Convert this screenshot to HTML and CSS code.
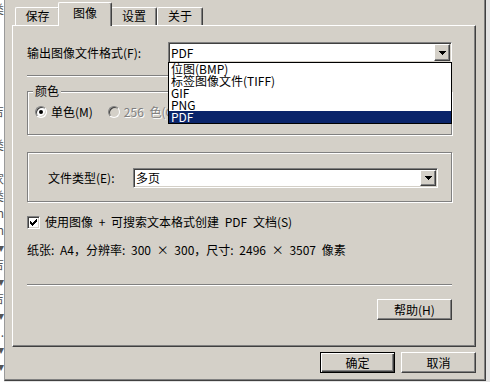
FILE: index.html
```html
<!DOCTYPE html>
<html lang="zh-CN">
<head>
    <meta charset="UTF-8">
    <meta name="viewport" content="width=device-width, initial-scale=1.0">
    <title>图像</title>
    <link rel="stylesheet" href="styles.css">
</head>
<body>
    <div class="screen">
        <!-- window behind the dialog, only a sliver shows -->
        <div class="behind">
            <span>类</span><span></span><span></span><span></span><span></span><span></span>
            <span>吉</span><span></span><span>类</span><span></span><span>家</span><span>类</span>
            <span>n</span><span>n</span><span>▾</span><span>吉</span><span>▾</span><span>吉</span>
            <span>▾</span><span>.</span><span>▾</span><span>▾</span>
        </div>

        <div class="dialog">
            <div class="tabs">
                <div class="tab">保存</div>
                <div class="tab active">图像</div>
                <div class="tab">设置</div>
                <div class="tab">关于</div>
            </div>

            <div class="panel">
                <div class="row format-row">
                    <label class="format-label">输出图像文件格式(F):</label>
                    <div class="combo format-combo">
                        <span class="combo-text">PDF</span>
                        <span class="drop-btn">
                            <svg width="7" height="4" viewBox="0 0 7 4"><rect x="0" y="0" width="7" height="1"/><rect x="1" y="1" width="5" height="1"/><rect x="2" y="2" width="3" height="1"/><rect x="3" y="3" width="1" height="1"/></svg>
                        </span>
                        <ul class="droplist">
                            <li>位图(BMP)</li>
                            <li>标签图像文件(TIFF)</li>
                            <li>GIF</li>
                            <li>PNG</li>
                            <li class="selected">PDF</li>
                        </ul>
                    </div>
                </div>

                <div class="separator"></div>

                <fieldset class="group color-group">
                    <legend>颜色</legend>
                    <div class="radios">
                        <span class="radio-item"><span class="radio checked"></span>单色(M)</span>
                        <span class="radio-item disabled"><span class="radio"></span>256 色(C)</span>
                    </div>
                </fieldset>

                <fieldset class="group type-group">
                    <div class="row">
                        <label class="type-label">文件类型(E):</label>
                        <div class="combo type-combo">
                            <span class="combo-text">多页</span>
                            <span class="drop-btn">
                                <svg width="7" height="4" viewBox="0 0 7 4"><rect x="0" y="0" width="7" height="1"/><rect x="1" y="1" width="5" height="1"/><rect x="2" y="2" width="3" height="1"/><rect x="3" y="3" width="1" height="1"/></svg>
                            </span>
                        </div>
                    </div>
                </fieldset>

                <div class="check-row">
                    <span class="checkbox">
                        <svg width="7" height="7" viewBox="0 0 7 7"><rect x="0" y="2" width="1" height="3"/><rect x="1" y="3" width="1" height="3"/><rect x="2" y="4" width="1" height="3"/><rect x="3" y="3" width="1" height="3"/><rect x="4" y="2" width="1" height="3"/><rect x="5" y="1" width="1" height="3"/><rect x="6" y="0" width="1" height="3"/></svg>
                    </span>
                    使用图像 + 可搜索文本格式创建 PDF 文档(S)
                </div>

                <div class="info">纸张: A4，分辨率: 300 × 300，尺寸: 2496 × 3507 像素</div>

                <div class="separator bottom-sep"></div>

                <div class="help-row">
                    <button class="btn">帮助(H)</button>
                </div>
            </div>

            <div class="actions">
                <button class="btn default">确定</button>
                <button class="btn">取消</button>
            </div>
        </div>
    </div>
</body>
</html>
```

FILE: styles.css
```css
/* classic dialog */
* {
    margin: 0;
    padding: 0;
    box-sizing: border-box;
}

body {
    font-family: "Noto Sans CJK SC", sans-serif;
    font-size: 12px;
    line-height: 14px;
    word-spacing: 3px;
    color: #000;
    background-color: #e4e4e4;
}

.screen {
    display: flex;
    width: 490px;
    height: 382px;
    overflow: hidden;
}

.behind {
    width: 4px;
    height: 382px;
    background-color: #fff;
    overflow: hidden;
    display: flex;
    flex-direction: column;
    align-items: flex-end;
    color: #555;
    flex-shrink: 0;
}

.behind span {
    display: block;
    height: 17px;
    line-height: 17px;
    white-space: nowrap;
}

.dialog {
    width: 482px;
    height: 381px;
    background-color: #d4d0c8;
    border-left: 1px solid #9a9a9a;
    border-right: 1px solid #404040;
    border-bottom: 1px solid #404040;
    box-shadow: inset -1px -1px #808080;
    padding-top: 2px;
}

/* tabs */
.tabs {
    display: flex;
    align-items: flex-end;
    height: 23px;
    padding-left: 10px;
}

.tab {
    width: 46px;
    height: 18px;
    text-align: center;
    line-height: 16px;
    border-top: 1px solid #fff;
    border-left: 1px solid #fff;
    border-right: 1px solid #404040;
    border-radius: 2px 2px 0 0;
    box-shadow: inset -1px 0 #808080;
    background-color: #d4d0c8;
}

.tab:first-child {
    width: 45px;
}

.tab.active {
    position: relative;
    z-index: 1;
    width: 54px;
    height: 24px;
    margin: 0 -1px -1px -2px;
    line-height: 19px;
}

/* panel */
.panel {
    margin-left: 7px;
    width: 464px;
    height: 322px;
    border-top: 1px solid #fff;
    border-left: 1px solid #fff;
    border-right: 1px solid #404040;
    border-bottom: 1px solid #404040;
    box-shadow: inset -1px -1px #808080;
    padding: 16px 23px 0 14px;
    display: flex;
    flex-direction: column;
}

.row {
    display: flex;
    align-items: center;
}

.format-row {
    height: 21px;
}

.format-label {
    width: 141px;
    flex-shrink: 0;
}

.combo {
    position: relative;
    flex: 1;
    display: flex;
    align-items: stretch;
    height: 21px;
    padding: 1px;
    background-color: #fff;
    border: 1px solid;
    border-color: #808080 #fff #fff #808080;
    box-shadow: inset 1px 1px #404040, inset -1px -1px #d4d0c8;
}

.combo-text {
    flex: 1;
    padding-left: 1px;
    line-height: 17px;
}

.drop-btn {
    width: 16px;
    display: flex;
    align-items: center;
    justify-content: center;
    background-color: #d4d0c8;
    border: 1px solid;
    border-color: #fff #404040 #404040 #fff;
    box-shadow: inset -1px -1px #808080;
}

.drop-btn svg {
    display: block;
    fill: #000;
    shape-rendering: crispEdges;
}

/* open list of the format combo */
.droplist {
    position: absolute;
    top: 19px;
    left: -1px;
    right: -1px;
    z-index: 2;
    list-style: none;
    background-color: #fff;
    border: 1px solid #000;
}

.droplist li {
    height: 12px;
    line-height: 12px;
    padding-left: 2px;
    white-space: nowrap;
}

.droplist li.selected {
    background-color: #0a246a;
    color: #fff;
}

.separator {
    margin-top: 12px;
    height: 2px;
    border-top: 1px solid #808080;
    border-bottom: 1px solid #fff;
}

/* group boxes */
.group {
    border: 1px solid #808080;
    box-shadow: inset 1px 1px #fff, 1px 1px #fff;
    min-width: 0;
}

.group legend {
    margin-left: -2px;
    padding: 0 2px;
    line-height: 14px;
    background-color: #d4d0c8;
}

.color-group {
    margin-top: 7px;
    padding: 7px 7px 15px 7px;
}

.radios {
    display: flex;
    align-items: center;
    height: 14px;
}

.radio-item {
    display: flex;
    align-items: center;
    white-space: nowrap;
}

.radio-item.disabled {
    margin-left: 15px;
    color: #808080;
    text-shadow: 1px 1px #fff;
}

.radio {
    width: 12px;
    height: 12px;
    margin-right: 4px;
    border-radius: 50%;
    border: 1px solid;
    border-color: #808080 #fff #fff #808080;
    box-shadow: inset 1px 1px #404040, inset -1px -1px #d4d0c8;
    background-color: #fff;
    display: flex;
    align-items: center;
    justify-content: center;
}

.radio.checked::after {
    content: "";
    width: 4px;
    height: 4px;
    border-radius: 50%;
    background-color: #000;
}

.disabled .radio {
    background-color: #d4d0c8;
}

.type-group {
    margin-top: 17px;
    padding: 15px 13px 13px 20px;
}

.type-label {
    width: 85px;
    flex-shrink: 0;
}

.type-combo {
    height: 20px;
}

.type-combo .combo-text {
    line-height: 16px;
}

/* checkbox + info */
.check-row {
    margin-top: 13px;
    height: 14px;
    display: flex;
    align-items: center;
    white-space: nowrap;
}

.checkbox {
    width: 13px;
    height: 13px;
    margin-right: 5px;
    background-color: #fff;
    border: 1px solid;
    border-color: #808080 #fff #fff #808080;
    box-shadow: inset 1px 1px #404040, inset -1px -1px #d4d0c8;
    display: flex;
    align-items: center;
    justify-content: center;
}

.checkbox svg {
    display: block;
    fill: #000;
    shape-rendering: crispEdges;
}

.info {
    margin-top: 14px;
    height: 14px;
    white-space: nowrap;
}

.bottom-sep {
    margin-top: 27px;
}

.help-row {
    margin-top: 13px;
    display: flex;
    justify-content: flex-end;
}

/* buttons */
.btn {
    width: 75px;
    height: 21px;
    font-family: inherit;
    font-size: 12px;
    color: #000;
    background-color: #d4d0c8;
    border: 1px solid;
    border-color: #fff #404040 #404040 #fff;
    box-shadow: inset -1px -1px #808080;
}

.btn.default {
    border: 1px solid #000;
    box-shadow: inset 1px 1px #fff, inset -1px -1px #404040, inset -2px -2px #808080;
}

.actions {
    margin-top: 5px;
    padding-right: 9px;
    display: flex;
    justify-content: flex-end;
    gap: 6px;
}
```
